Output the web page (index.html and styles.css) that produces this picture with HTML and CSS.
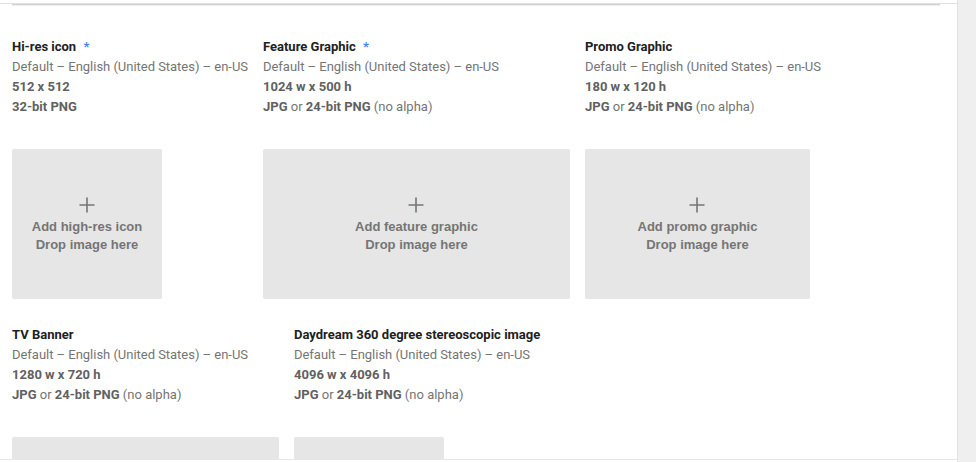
FILE: index.html
```html
<!DOCTYPE html>
<html>
<head>
<meta charset="utf-8">
<link rel="stylesheet" href="styles.css">
</head>
<body>
<div class="page">
  <div class="main">
    <div class="topbar"></div>
    <div class="shadow"></div>
    <div class="assets">
      <div class="asset">
        <div class="title">Hi-res icon <span class="req">*</span></div>
        <div class="sub">Default – English (United States) – en-US</div>
        <div class="spec">512 x 512</div>
        <div class="spec">32-bit PNG</div>
        <div class="drop w150">
          <svg class="plus" width="16" height="16" viewBox="0 0 16 16"><path d="M8 0.5v15M0.5 8h15" stroke="#757575" stroke-width="1.6" fill="none"/></svg>
          <div class="droptext">Add high-res icon</div>
          <div class="droptext">Drop image here</div>
        </div>
      </div>
      <div class="asset">
        <div class="title">Feature Graphic <span class="req">*</span></div>
        <div class="sub">Default – English (United States) – en-US</div>
        <div class="spec">1024 w x 500 h</div>
        <div class="spec">JPG <span class="nb">or</span> 24-bit PNG <span class="nb">(no alpha)</span></div>
        <div class="drop w307">
          <svg class="plus" width="16" height="16" viewBox="0 0 16 16"><path d="M8 0.5v15M0.5 8h15" stroke="#757575" stroke-width="1.6" fill="none"/></svg>
          <div class="droptext">Add feature graphic</div>
          <div class="droptext">Drop image here</div>
        </div>
      </div>
      <div class="asset">
        <div class="title">Promo Graphic</div>
        <div class="sub">Default – English (United States) – en-US</div>
        <div class="spec">180 w x 120 h</div>
        <div class="spec">JPG <span class="nb">or</span> 24-bit PNG <span class="nb">(no alpha)</span></div>
        <div class="drop w225">
          <svg class="plus" width="16" height="16" viewBox="0 0 16 16"><path d="M8 0.5v15M0.5 8h15" stroke="#757575" stroke-width="1.6" fill="none"/></svg>
          <div class="droptext">Add promo graphic</div>
          <div class="droptext">Drop image here</div>
        </div>
      </div>
      <div class="asset">
        <div class="title">TV Banner</div>
        <div class="sub">Default – English (United States) – en-US</div>
        <div class="spec">1280 w x 720 h</div>
        <div class="spec">JPG <span class="nb">or</span> 24-bit PNG <span class="nb">(no alpha)</span></div>
        <div class="drop w267"></div>
      </div>
      <div class="asset">
        <div class="title">Daydream 360 degree stereoscopic image</div>
        <div class="sub">Default – English (United States) – en-US</div>
        <div class="spec">4096 w x 4096 h</div>
        <div class="spec">JPG <span class="nb">or</span> 24-bit PNG <span class="nb">(no alpha)</span></div>
        <div class="drop w150"></div>
      </div>
    </div>
  </div>
  <div class="rail"></div>
</div>
</body>
</html>
```

FILE: styles.css
```css
html, body {
  margin: 0;
  padding: 0;
  background: #ffffff;
}
.page {
  display: flex;
  width: 976px;
  height: 462px;
  overflow: hidden;
  font-family: Roboto, "Liberation Sans", sans-serif;
  font-size: 13px;
}
.main {
  flex: 1;
  height: 459px;
  overflow: hidden;
  border-bottom: 1px solid #e6e6e6;
  background: #ffffff;
}
.rail {
  width: 19px;
  height: 462px;
  background: #efefef;
  border-left: 1px solid #e2e2e2;
  box-sizing: border-box;
}
.topbar {
  height: 3px;
  border-bottom: 1px solid #e0e0e0;
}
.shadow {
  height: 1px;
  margin: 0 17px 0 12px;
  background: #d2d2d2;
  box-shadow: 0 1px 1px #ececec;
}
.assets {
  display: flex;
  flex-wrap: wrap;
  column-gap: 15px;
  row-gap: 26px;
  padding: 32px 0 0 12px;
}
.asset {
  display: flex;
  flex-direction: column;
  align-items: flex-start;
  line-height: 20px;
}
.title {
  color: #212121;
  font-weight: 700;
  white-space: nowrap;
}
.req {
  color: #4285f4;
  margin-left: 4px;
}
.sub {
  color: #757575;
  white-space: nowrap;
  letter-spacing: -0.025px;
}
.spec {
  color: #616161;
  font-weight: 700;
  white-space: nowrap;
}
.nb {
  font-weight: 400;
  color: #757575;
}
.drop {
  margin-top: 32px;
  height: 150px;
  box-sizing: border-box;
  padding-top: 2px;
  background: #e6e6e6;
  border-radius: 2px;
  display: flex;
  flex-direction: column;
  align-items: center;
  justify-content: center;
  font-family: "Liberation Sans", Arial, sans-serif;
}
.w150 { width: 150px; }
.w307 { width: 307px; }
.w225 { width: 225px; }
.w267 { width: 267px; }
.plus {
  display: block;
  margin-top: 1px;
  margin-bottom: 5px;
}
.droptext {
  color: #757575;
  font-weight: 700;
  font-size: 13px;
  line-height: 18px;
}
```
